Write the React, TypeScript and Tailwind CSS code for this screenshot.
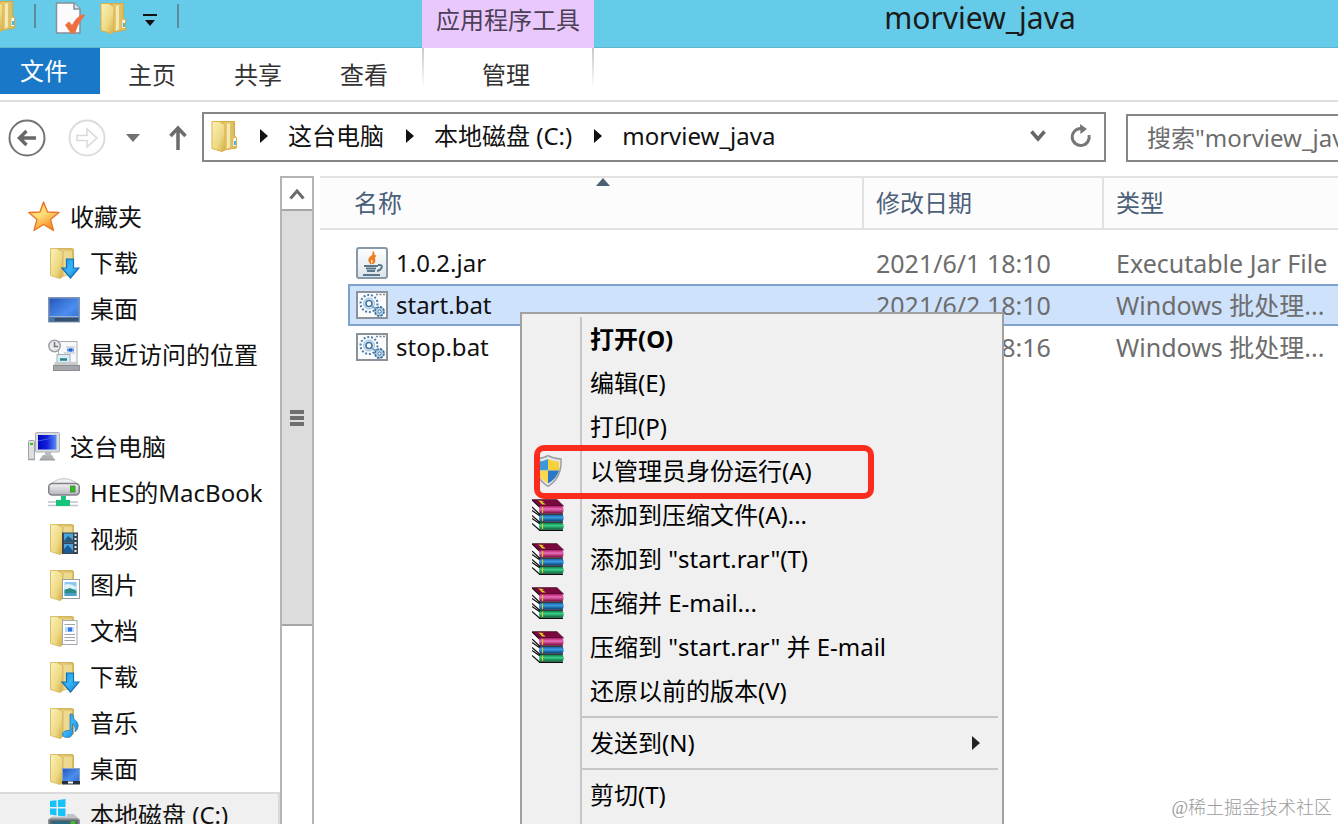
import type { ReactNode } from "react";

type IconProps = { className?: string };

function Defs() {
  return (
    <svg className="absolute h-0 w-0" aria-hidden="true">
      <defs>
        <linearGradient id="flap" x1="0" y1="0" x2="1" y2="1">
          <stop offset="0" stopColor="#fbf2b8" />
          <stop offset="0.6" stopColor="#eed984" />
          <stop offset="1" stopColor="#cfab44" />
        </linearGradient>
        <linearGradient id="back" x1="0" y1="0" x2="1" y2="0">
          <stop offset="0" stopColor="#c9ac55" />
          <stop offset="0.35" stopColor="#e4cb78" />
          <stop offset="1" stopColor="#d8b95a" />
        </linearGradient>
        <linearGradient id="arrow" x1="0" y1="0" x2="1" y2="1">
          <stop offset="0" stopColor="#1e9ae8" />
          <stop offset="0.5" stopColor="#38b4f8" />
          <stop offset="1" stopColor="#0f7fd0" />
        </linearGradient>
        <linearGradient id="screen" x1="0" y1="0" x2="1" y2="1">
          <stop offset="0" stopColor="#2456b8" />
          <stop offset="0.6" stopColor="#4c8df0" />
          <stop offset="1" stopColor="#2f6cd0" />
        </linearGradient>
        <linearGradient id="deep" x1="0" y1="0" x2="1" y2="0">
          <stop offset="0" stopColor="#0008b8" />
          <stop offset="0.5" stopColor="#1420e0" />
          <stop offset="1" stopColor="#5a92ee" />
        </linearGradient>
        <linearGradient id="star" x1="0" y1="0" x2="0.6" y2="1">
          <stop offset="0" stopColor="#ffc23c" />
          <stop offset="0.5" stopColor="#ffe07a" />
          <stop offset="1" stopColor="#f58a1f" />
        </linearGradient>
        <linearGradient id="metal" x1="0" y1="0" x2="0" y2="1">
          <stop offset="0" stopColor="#f4f4f6" />
          <stop offset="1" stopColor="#b4b4ba" />
        </linearGradient>
        <linearGradient id="jar" x1="0" y1="0" x2="0" y2="1">
          <stop offset="0" stopColor="#ffffff" />
          <stop offset="1" stopColor="#dce4ea" />
        </linearGradient>
        <linearGradient id="rarRed" x1="0" y1="0" x2="0" y2="1">
          <stop offset="0" stopColor="#b01868" />
          <stop offset="0.4" stopColor="#e870b8" />
          <stop offset="1" stopColor="#80003c" />
        </linearGradient>
        <linearGradient id="rarBlue" x1="0" y1="0" x2="0" y2="1">
          <stop offset="0" stopColor="#1460a8" />
          <stop offset="0.4" stopColor="#3c9ce0" />
          <stop offset="1" stopColor="#003e78" />
        </linearGradient>
        <linearGradient id="rarGreen" x1="0" y1="0" x2="0" y2="1">
          <stop offset="0" stopColor="#008048" />
          <stop offset="0.4" stopColor="#3ccc88" />
          <stop offset="1" stopColor="#006030" />
        </linearGradient>
      </defs>
    </svg>
  );
}

function Svg({ className = "size-8", children }: IconProps & { children: ReactNode }) {
  return (
    <svg viewBox="0 0 32 32" className={`shrink-0 ${className}`} aria-hidden="true">
      {children}
    </svg>
  );
}

function Folder({ className, children }: IconProps & { children?: ReactNode }) {
  return (
    <Svg className={className}>
      <path d="M8 1.500 H24 Q25.500 1.500 25.500 3 V27 L13 29.500 Z" fill="url(#back)" stroke="#d3b45c" strokeWidth="1" />
      <path d="M16 4 L24 3.500 V27 L16 29 Z" fill="#f2e2a0" opacity="0.7" />
      <path d="M2.500 1.500 H9 L14.500 4.500 V30 L12 31.500 L2.500 28.500 Z" fill="url(#flap)" stroke="#d9bf6c" strokeWidth="1" />
      {children}
    </Svg>
  );
}

function TabFolder({ className }: IconProps) {
  return (
    <Svg className={className}>
      <path d="M9 1.500 H24.500 V16 L26.500 17.500 V28 L13 30 Z" fill="url(#back)" stroke="#dba93a" strokeWidth="1" />
      <path d="M17 4 L20 3 V27 L17 29 Z" fill="#fff6cc" opacity="0.7" />
      <path d="M2 1.500 H9.500 L15 4.500 V30 L12 31.500 L2 28.500 Z" fill="url(#flap)" stroke="#dcb04a" strokeWidth="1" />
      <rect x="23.500" y="18" width="2.500" height="8" fill="#fff" />
      <rect x="24" y="21" width="2" height="4" fill="#48b8e0" />
    </Svg>
  );
}

function DownloadFolder() {
  return (
    <Folder>
      <path d="M18.500 12 H25.500 V21 H31 L22.500 31 L14 21 H18.500 Z" fill="url(#arrow)" stroke="#1670b4" strokeWidth="1.200" />
    </Folder>
  );
}

function VideoFolder() {
  return (
    <Folder>
      <rect x="14" y="9.500" width="16" height="21.500" fill="#3c4450" />
      <rect x="16" y="10.500" width="9" height="9" fill="#48a4dc" />
      <path d="M16 18 L20 13 L25 17 V19.500 H16 Z" fill="#245a78" />
      <rect x="16" y="21" width="9" height="9" fill="#48a4dc" />
      <path d="M16 26 L20 22 L25 28 V30 H16 Z" fill="#1c5a94" />
      <path d="M27.500 11 V31" stroke="#e8ecf0" strokeWidth="2" strokeDasharray="2 2" />
    </Folder>
  );
}

function PictureFolder() {
  return (
    <Folder>
      <rect x="14.500" y="10.500" width="17" height="19" fill="#fff" stroke="#9a9ea4" />
      <rect x="16.500" y="13" width="12" height="14" fill="#8cc8ee" />
      <path d="M16.500 16 Q21 13 28.500 18 V20 H16.500 Z" fill="#dff2fa" />
      <path d="M16.500 21 L22 19 L28.500 22 V24 H16.500 Z" fill="#2c8c84" />
      <rect x="16.500" y="24" width="12" height="3" fill="#4ca0c8" />
    </Folder>
  );
}

function DocumentFolder() {
  return (
    <Folder>
      <rect x="14.500" y="5.500" width="14.500" height="24" fill="#fdfdfd" stroke="#a4a8ac" />
      <path d="M16.500 9.500 H27 M16.500 19.500 H27 M16.500 22.500 H27 M16.500 25.500 H27" stroke="#a0a4aa" strokeWidth="1.200" />
      <rect x="17" y="12" width="9" height="5" fill="#bcd8fa" />
      <rect x="20" y="12.500" width="4" height="4" fill="#2c74e8" />
    </Folder>
  );
}

function MusicFolder() {
  return (
    <Folder>
      <path d="M22 7 H24.500 Q25 12 29 15 Q32 20 27 25 Q28 19 24.500 17 V26 Q24 31 18.500 30.500 Q14 30 14.500 26.500 Q16 23 22 23.500 Z" fill="url(#arrow)" stroke="#2e7cb0" strokeWidth="0.800" />
    </Folder>
  );
}

function DesktopFolder() {
  return (
    <Folder>
      <rect x="14.500" y="15.500" width="17" height="13" fill="url(#screen)" stroke="#8aa2c4" />
      <rect x="14" y="28" width="18" height="3.500" fill="#26303c" />
      <path d="M20 29.500 H25" stroke="#fff" strokeWidth="2" />
    </Folder>
  );
}

function Star() {
  return (
    <Svg>
      <path d="M15.500 1 L19.500 11 L31 11.500 L22.500 18.500 L25.500 29.500 L15.500 23.500 L6 29.500 L9 18.500 L0.800 11.500 L12 11 Z" fill="url(#star)" stroke="#e8782c" strokeWidth="1.400" strokeLinejoin="round" />
    </Svg>
  );
}

function Desktop() {
  return (
    <Svg>
      <rect x="0.750" y="4.750" width="30.500" height="24" fill="url(#screen)" stroke="#8496b4" strokeWidth="1.500" />
      <rect x="1.500" y="23" width="29" height="1.500" fill="#9ab4d8" />
      <rect x="1.500" y="24.500" width="29" height="4" fill="#34506e" />
      <rect x="1.500" y="24.500" width="5" height="4" fill="#4878a8" />
    </Svg>
  );
}

function Recent() {
  return (
    <Svg>
      <rect x="10.500" y="2.500" width="18.500" height="24" fill="#f6f8fa" stroke="#a8acb0" />
      <path d="M18 8 H27 M16 14 H27" stroke="#b8bcc2" />
      <path d="M19 11 H26" stroke="#5c94e8" strokeWidth="3" />
      <path d="M21 11 H24" stroke="#2c60d8" strokeWidth="3" />
      <rect x="9" y="15.500" width="13" height="9" fill="#dcecf4" stroke="#a4b0b8" />
      <path d="M7 23 L5 27 H31.500 L29 23 Z" fill="#c8cacc" />
      <path d="M12 20.500 H19" stroke="#24848c" strokeWidth="2.500" />
      <rect x="5.500" y="26.500" width="26" height="5" fill="#a4a6aa" stroke="#8c8e92" />
      <circle cx="6.500" cy="7" r="5.700" fill="#e8eaec" stroke="#9c9fa4" strokeWidth="1.500" />
      <path d="M6.500 3 V7.500 H10" fill="none" stroke="#707478" strokeWidth="1.500" />
    </Svg>
  );
}

function Computer() {
  return (
    <Svg>
      <rect x="0.500" y="9.500" width="6" height="19" rx="1" fill="#dcdfe0" stroke="#a0a4a8" />
      <rect x="2" y="12" width="3" height="2" fill="#34c424" />
      <path d="M15 24 H24 L27 29.500 H11 Z" fill="#aeb2b6" />
      <rect x="7.500" y="1.500" width="24" height="19.500" rx="1" fill="#d8dade" stroke="#aeb2b8" />
      <path d="M17 21 H23 V25 H17 Z" fill="#b8bcc0" />
      <rect x="10" y="4" width="18.500" height="14.500" fill="url(#deep)" />
      <path d="M10 10 Q20 9 28 4" fill="none" stroke="#4e7cf0" strokeWidth="1" opacity="0.7" />
      <path d="M0 28.500 H7 M12 28.500 H27" stroke="#9ea2a6" strokeWidth="1.500" />
    </Svg>
  );
}

function NetworkDrive() {
  return (
    <Svg>
      <path d="M5 5 Q16 -2 27 5 L31 10 H1 Z" fill="#f0f0f2" stroke="#b8b8c0" strokeWidth="0.800" />
      <rect x="0.750" y="6.500" width="30.500" height="11.500" rx="3.500" fill="url(#metal)" stroke="#808088" strokeWidth="1.500" />
      <rect x="22.500" y="9" width="4.500" height="6" fill="#2cc018" stroke="#4a7c40" strokeWidth="0.800" />
      <path d="M0 25 H30 M0 28.500 H30" stroke="#c0c4c8" strokeWidth="1.500" />
      <path d="M13 19 H18 V23 H22 V29 H8 V23 H13 Z" fill="#18c47c" />
    </Svg>
  );
}

function SystemDrive() {
  return (
    <Svg>
      <path d="M2 2 L8.500 1.200 V8 H2 Z M10 1 L17.500 0 V8 H10 Z M2 9.500 H8.500 V16.500 L2 15.500 Z M10 9.500 H17.500 V17.500 L10 16.700 Z" fill="#16c2f8" />
      <path d="M19 15 H26 L31 20 H1 L4 17.500 H19 Z" fill="#c0c4c8" />
      <rect x="0.750" y="20" width="30.500" height="11" rx="2" fill="#62686e" stroke="#8e9296" strokeWidth="1.500" />
      <rect x="4" y="22" width="17" height="5" fill="#2c6880" />
      <rect x="23" y="22" width="4" height="5" fill="#34c424" />
    </Svg>
  );
}

function JarFile() {
  return (
    <Svg>
      <rect x="1" y="1" width="30" height="30" rx="2" fill="url(#jar)" stroke="#8898a6" strokeWidth="2" />
      <path d="M17 4.500 Q18 8 14.500 10 Q11 13 15 17 Q13 13 17 11 Q19 8 17 4.500 Z M20 8.500 Q16 10 16.500 12.500 Q18 14.500 16 17 Q20 15 18.500 12 Q18 10 20 8.500 Z" fill="#f07c1c" stroke="#f07c1c" strokeWidth="1.200" />
      <path d="M8 19 H22 M10 21.500 H20 M11 24 H19 M7 28 H24" stroke="#58768c" strokeWidth="1.800" />
      <path d="M22 18 Q27 17.500 25.500 21 Q24.500 23 21 24" fill="none" stroke="#58768c" strokeWidth="2" />
    </Svg>
  );
}

function BatFile() {
  return (
    <Svg>
      <rect x="1" y="3" width="30" height="26" fill="#fafcfe" stroke="#8c929a" strokeWidth="2" />
      <path d="M20 5.500 H29" stroke="#7c8894" strokeWidth="1.500" strokeDasharray="2 1.500" />
      <circle cx="13" cy="14.500" r="8.500" fill="none" stroke="#4c7ca8" strokeWidth="2" strokeDasharray="2 1.800" />
      <circle cx="13" cy="14.500" r="5.500" fill="#d4e6f2" stroke="#9cbcd6" />
      <circle cx="13" cy="14.500" r="3" fill="#fff" stroke="#4474a4" strokeWidth="1.600" />
      <path d="M16 17.500 L22 21" stroke="#6c9cc4" strokeWidth="1.500" />
      <circle cx="23.500" cy="22.500" r="4.500" fill="#b4d4ea" stroke="#44749c" strokeWidth="1.800" strokeDasharray="2.500 1" />
      <circle cx="23.500" cy="22.500" r="1.600" fill="#fff" stroke="#4474a4" />
    </Svg>
  );
}

function Shield() {
  return (
    <Svg>
      <path d="M16 0.700 Q22 4 29 4 Q30 23 16 31.300 Q2 23 3 4 Q10 4 16 0.700 Z" fill="#e4e6e8" stroke="#9a9ea2" strokeWidth="1.500" />
      <path d="M16 4 V15.500 H5 Q4.800 11 5.300 6.500 Q11 6.500 16 4 Z" fill="#3c98dc" />
      <path d="M16 4 Q21 6.500 26.700 6.500 Q27.200 11 27 15.500 H16 Z" fill="#f8d038" />
      <path d="M5 15.500 H16 V28.500 Q7 23.500 5 15.500 Z" fill="#fbd84e" />
      <path d="M27 15.500 H16 V28.500 Q25 23.500 27 15.500 Z" fill="#2c78c8" />
    </Svg>
  );
}

function Rar() {
  return (
    <Svg>
      <path d="M0 0.500 L8 8 V15 L0 8 Z M0 11 L8 16 V23 L0 16.500 Z M0 19 L8 24 V31 L0 24.500 Z" fill="#fff" />
      <path d="M0 1 L8 8.500 M0 8 L8 15.500 M0 11.500 L8 17 M0 16.500 L8 23.500 M0 19.500 L8 25 M0 24.500 L8 31.500" fill="none" stroke="#111" strokeWidth="1.200" />
      <path d="M0.500 0.700 H25 L31.500 7 H7 Z" fill="#7c0840" stroke="#3c0020" strokeWidth="0.800" />
      <path d="M6 1.500 L12 2 L10 3 L14 5.500 H10 L8 3 Z" fill="#e8d020" />
      <path d="M8 7 H30 Q33 10 30.500 14.500 H8 Q6 10 8 7 Z" fill="url(#rarRed)" />
      <path d="M8 15.800 H30.500 Q33 18.500 30.500 22.500 H8 Q6 19 8 15.800 Z" fill="url(#rarBlue)" />
      <path d="M8 23.800 H30.500 Q33 27 30.500 30.800 H8 Q6 27 8 23.800 Z" fill="url(#rarGreen)" />
      <path d="M7 15.200 H31 M7 23.200 H31 M7 31.300 H31" stroke="#0c0c10" strokeWidth="1.200" />
      <path d="M10.500 8 V14 M10.500 16.500 V22 M10.500 24.500 V30" stroke="#d8c820" strokeWidth="1.200" />
    </Svg>
  );
}

function CheckedPage() {
  return (
    <Svg>
      <path d="M1.500 1 H19 L25 7 V31 H1.500 Z" fill="#fbfbfc" stroke="#84909a" strokeWidth="1.500" />
      <path d="M19 1 V7 H25" fill="#dce0e4" stroke="#84909a" strokeWidth="1.500" />
      <path d="M10 23 L14 19.500 L17 23 Q21 15 28 12 L30 13.500 Q23 21 20 31.500 H16 Z" fill="#ee7040" />
    </Svg>
  );
}

type NavItem = { label: string; icon: ReactNode; current?: boolean };

const favorites: NavItem[] = [
  { label: "下载", icon: <DownloadFolder /> },
  { label: "桌面", icon: <Desktop /> },
  { label: "最近访问的位置", icon: <Recent /> },
];

const thisPc: NavItem[] = [
  { label: "HES的MacBook", icon: <NetworkDrive /> },
  { label: "视频", icon: <VideoFolder /> },
  { label: "图片", icon: <PictureFolder /> },
  { label: "文档", icon: <DocumentFolder /> },
  { label: "下载", icon: <DownloadFolder /> },
  { label: "音乐", icon: <MusicFolder /> },
  { label: "桌面", icon: <DesktopFolder /> },
  { label: "本地磁盘 (C:)", icon: <SystemDrive />, current: true },
];

function NavGroup({ label, icon, items }: { label: string; icon: ReactNode; items: NavItem[] }) {
  return (
    <section>
      <a href="#" className="flex h-[46px] items-center gap-2.5 pl-7">
        {icon}
        <span>{label}</span>
      </a>
      <ul>
        {items.map((item) => (
          <li key={item.label}>
            <a
              href="#"
              className={
                item.current
                  ? "flex h-[46px] items-center gap-2.5 border-2 border-l-0 border-[#dadada] bg-[#f0f0f0] pl-12"
                  : "flex h-[46px] items-center gap-2.5 pl-12"
              }
            >
              {item.icon}
              <span>{item.label}</span>
            </a>
          </li>
        ))}
      </ul>
    </section>
  );
}

const files = [
  { name: "1.0.2.jar", date: "2021/6/1 18:10", type: "Executable Jar File", icon: <JarFile /> },
  { name: "start.bat", date: "2021/6/2 18:10", type: "Windows 批处理...", icon: <BatFile />, selected: true },
  { name: "stop.bat", date: "2021/6/2 18:16", type: "Windows 批处理...", icon: <BatFile /> },
];

type MenuEntry = { label: string; icon?: ReactNode; bold?: boolean; marked?: boolean; submenu?: boolean };

const menuGroups: MenuEntry[][] = [
  [
    { label: "打开(O)", bold: true },
    { label: "编辑(E)" },
    { label: "打印(P)" },
    { label: "以管理员身份运行(A)", icon: <Shield />, marked: true },
    { label: "添加到压缩文件(A)...", icon: <Rar /> },
    { label: '添加到 "start.rar"(T)', icon: <Rar /> },
    { label: "压缩并 E-mail...", icon: <Rar /> },
    { label: '压缩到 "start.rar" 并 E-mail', icon: <Rar /> },
    { label: "还原以前的版本(V)" },
  ],
  [{ label: "发送到(N)", submenu: true }],
  [{ label: "剪切(T)" }],
];

function ContextMenu() {
  return (
    <div
      role="menu"
      className="absolute top-[312px] bottom-0 left-[520px] w-[484px] overflow-hidden border-2 border-b-0 border-[#a0a0a0] bg-[#f0f0f0] pt-[3px] text-black"
    >
      <div className="h-full bg-[linear-gradient(#c6c6c6,#c6c6c6)] bg-[length:2px_100%] bg-[position:58px_0] bg-no-repeat">
        {menuGroups.map((group, g) => (
          <div key={g}>
            {g > 0 && (
              <div role="separator" className="flex h-2 items-center pr-1 pl-[60px]">
                <div className="h-0.5 w-full bg-[#c6c6c6]" />
              </div>
            )}
            {group.map((entry) => (
              <button
                key={entry.label}
                type="button"
                role="menuitem"
                className="relative flex h-11 w-full items-center pr-4 text-left"
              >
                <span className="flex w-[68px] shrink-0 pl-2.5">{entry.icon}</span>
                <span className={entry.bold ? "flex-1 font-bold whitespace-pre" : "flex-1 whitespace-pre"}>
                  {entry.label}
                </span>
                {entry.submenu && (
                  <svg viewBox="0 0 8 14" className="mr-1.5 h-3.5 w-2" aria-hidden="true">
                    <path d="M0 0 L8 7 L0 14 Z" fill="#222" />
                  </svg>
                )}
                {entry.marked && (
                  <span className="absolute -top-1 -bottom-1.5 left-3 w-[340px] rounded-[10px] border-6 border-[#fb2c1e]" />
                )}
              </button>
            ))}
          </div>
        ))}
      </div>
    </div>
  );
}

function Crumb({ children }: { children: string }) {
  return (
    <>
      <svg viewBox="0 0 8 14" className="ml-0.5 h-3.5 w-2 shrink-0" aria-hidden="true">
        <path d="M0 0 L8 7 L0 14 Z" fill="#111" />
      </svg>
      <a href="#" className="whitespace-nowrap">
        {children}
      </a>
    </>
  );
}

export default function App() {
  return (
    <div className="relative flex h-screen flex-col overflow-hidden bg-white font-['Noto_Sans','Noto_Sans_CJK_SC',sans-serif] text-2xl leading-8 text-[#111]">
      <Defs />

      <header className="flex h-12 shrink-0 border-b border-[#62b4cc] bg-[#66cbe9]">
        <div className="flex w-[422px] shrink-0 items-start">
          <TabFolder className="-ml-3 size-8" />
          <span className="mt-1 ml-3.5 h-6 w-0.5 bg-[#5a8c9c]" />
          <button type="button" aria-label="属性" className="mt-0.5 ml-[19px]">
            <CheckedPage />
          </button>
          <button type="button" aria-label="新建文件夹" className="mt-0.5 ml-3">
            <TabFolder />
          </button>
          <button type="button" aria-label="自定义快速访问工具栏" className="mt-3.5 ml-3">
            <svg viewBox="0 0 14 12" className="h-3 w-3.5" aria-hidden="true">
              <path d="M0 0 H14 V2 H0 Z M2 6 H12 L7 12 Z" fill="#111" />
            </svg>
          </button>
          <span className="mt-1 ml-5 h-6 w-0.5 bg-[#5a8c9c]" />
        </div>
        <div className="-mb-px flex w-[172px] shrink-0 justify-center bg-[#e9c8fc] pt-1 text-[#4c3f56]">
          应用程序工具
        </div>
        <h1 className="flex-1 pl-7 text-center text-3xl leading-9 text-[#1b1b1b]">morview_java</h1>
      </header>

      <nav className="flex h-[54px] shrink-0 items-start border-b-2 border-[#dedede] text-[#333]">
        <button type="button" className="h-[46px] w-[100px] bg-[#1a78c8] pr-3 text-white">
          文件
        </button>
        <button type="button" className="h-[54px] w-[106px] pr-0.5">
          主页
        </button>
        <button type="button" className="h-[54px] w-[106px] pr-0.5">
          共享
        </button>
        <button type="button" className="h-[54px] w-[106px] pr-0.5">
          查看
        </button>
        <div className="ml-1 flex h-[52px] w-[172px] justify-between">
          <span className="h-10 w-0.5 bg-linear-to-b from-[#c8c8c8] to-white" />
          <button type="button" className="h-[54px] flex-1 pr-1">
            管理
          </button>
          <span className="h-10 w-0.5 bg-linear-to-b from-[#c8c8c8] to-white" />
        </div>
      </nav>

      <div className="flex h-[74px] shrink-0 items-center overflow-hidden">
        <div className="mb-0.5 flex w-[202px] shrink-0 items-center pl-2">
          <button type="button" aria-label="后退">
            <svg viewBox="0 0 38 38" className="size-[38px]" fill="none" aria-hidden="true">
              <circle cx="19" cy="19" r="17.500" stroke="#747474" strokeWidth="2" />
              <path d="M28 19 H12 M18.500 12 L11.500 19 L18.500 26" stroke="#686868" strokeWidth="3.500" />
            </svg>
          </button>
          <button type="button" aria-label="前进" className="ml-[22px]">
            <svg viewBox="0 0 38 38" className="size-[38px]" fill="none" aria-hidden="true">
              <circle cx="19" cy="19" r="17.500" stroke="#dcdcdc" strokeWidth="2" />
              <path d="M9 16.500 H19 V10 L29 19 L19 28 V21.500 H9 Z" stroke="#dadada" strokeWidth="1.500" />
            </svg>
          </button>
          <button type="button" aria-label="最近浏览的位置" className="ml-5">
            <svg viewBox="0 0 14 8" className="h-2 w-3.5" aria-hidden="true">
              <path d="M0 0 H14 L7 8 Z" fill="#707070" />
            </svg>
          </button>
          <button type="button" aria-label="上移" className="ml-[29px]">
            <svg viewBox="0 0 18 26" className="h-[26px] w-[18px]" fill="none" aria-hidden="true">
              <path d="M9 25 V3 M1.500 11 L9 3 L16.500 11" stroke="#6c6c6c" strokeWidth="3.500" />
            </svg>
          </button>
        </div>
        <div className="mb-1 flex h-[50px] min-w-0 flex-1 items-center gap-5 border-2 border-[#868686] pr-3 pb-0.5 pl-1.5">
          <TabFolder className="-mr-1 size-8" />
          <Crumb>这台电脑</Crumb>
          <Crumb>本地磁盘 (C:)</Crumb>
          <Crumb>morview_java</Crumb>
          <button type="button" aria-label="以前的位置" className="ml-auto">
            <svg viewBox="0 0 16 12" className="h-3 w-4" fill="none" aria-hidden="true">
              <path d="M1.500 1.500 L8 9 L14.500 1.500" stroke="#666" strokeWidth="3.500" />
            </svg>
          </button>
          <button type="button" aria-label="刷新" className="pl-1">
            <svg viewBox="0 0 22 24" className="h-6 w-[22px]" fill="none" aria-hidden="true">
              <path d="M12 4.500 H10.500 A8.500 8.500 0 1 0 19 11" stroke="#767676" strokeWidth="3" />
              <path d="M10 0 L17 5 L10.500 10 Z" fill="#767676" />
            </svg>
          </button>
        </div>
        <div className="mb-0.5 ml-5 flex w-[212px] shrink-0">
          <label htmlFor="search" className="sr-only">
            搜索
          </label>
          <input
            id="search"
            type="text"
            placeholder={'搜索"morview_java"'}
            className="-mr-16 h-12 w-[276px] shrink-0 border-2 border-[#868686] pb-0.5 pl-[19px] placeholder-[#6d6d6d] outline-none"
          />
        </div>
      </div>

      <main className="flex min-h-0 flex-1">
        <aside className="w-[280px] shrink-0 overflow-hidden pt-[18px] whitespace-nowrap">
          <NavGroup label="收藏夹" icon={<Star />} items={favorites} />
          <div className="h-[46px]" />
          <NavGroup label="这台电脑" icon={<Computer />} items={thisPc} />
        </aside>

        <div className="flex w-[34px] shrink-0 flex-col border-2 border-b-0 border-[#b4b4b4]">
          <button type="button" aria-label="向上滚动" className="flex h-[31px] shrink-0 items-center justify-center">
            <svg viewBox="0 0 16 12" className="h-3 w-4" fill="none" aria-hidden="true">
              <path d="M1.500 10.500 L8 3 L14.500 10.500" stroke="#6a6a6a" strokeWidth="3" />
            </svg>
          </button>
          <div className="flex h-[417px] flex-col items-center justify-center gap-0.5 border-y-2 border-[#a6a6a6] bg-[#dcdcdc]">
            <span className="h-1 w-3.5 bg-[#6e6e6e]" />
            <span className="h-1 w-3.5 bg-[#6e6e6e]" />
            <span className="h-1 w-3.5 bg-[#6e6e6e]" />
          </div>
        </div>

        <div className="min-w-0 flex-1 overflow-hidden pl-1.5">
          <table className="w-full table-fixed border-separate border-spacing-0 text-left whitespace-nowrap">
            <colgroup>
              <col className="w-7" />
              <col className="w-[516px]" />
              <col className="w-60" />
              <col />
            </colgroup>
            <thead className="text-[#4c607a]">
              <tr className="h-[54px]">
                <th
                  colSpan={2}
                  scope="col"
                  className="relative border-y-2 border-r-2 border-[#e2e2e2] bg-[#fcfcfc] pl-[34px] font-normal"
                >
                  名称
                  <svg viewBox="0 0 14 8" className="absolute top-0 left-[276px] h-2 w-3.5" aria-hidden="true">
                    <path d="M7 0 L14 8 H0 Z" fill="#4c6074" />
                  </svg>
                </th>
                <th scope="col" className="border-y-2 border-r-2 border-[#e2e2e2] bg-[#fcfcfc] pl-3 font-normal">
                  修改日期
                </th>
                <th scope="col" className="border-y-2 border-[#e2e2e2] bg-[#fcfcfc] pl-3 font-normal">
                  类型
                </th>
              </tr>
              <tr className="h-3" aria-hidden="true">
                <td colSpan={4} />
              </tr>
            </thead>
            <tbody>
              {files.map((file) => (
                <tr key={file.name} className="h-[42px] text-[25px] text-[#6d6d6d]">
                  <td />
                  <td
                    className={
                      file.selected
                        ? "border-y-2 border-l-2 border-[#7da2ce] bg-[#cfe2fc] pl-1.5 text-2xl leading-8 text-[#111]"
                        : "pl-2 text-2xl leading-8 text-[#111]"
                    }
                  >
                    <span className="flex items-center gap-2">
                      {file.icon}
                      <span>{file.name}</span>
                    </span>
                  </td>
                  <td className={file.selected ? "border-y-2 border-[#7da2ce] bg-[#cfe2fc] pl-3" : "pl-3"}>
                    {file.date}
                  </td>
                  <td className={file.selected ? "border-y-2 border-[#7da2ce] bg-[#cfe2fc] pl-3" : "pl-3"}>
                    {file.type}
                  </td>
                </tr>
              ))}
            </tbody>
          </table>
        </div>
      </main>

      <ContextMenu />

      <p className="absolute right-1.5 bottom-1 font-['Liberation_Serif','Noto_Sans_CJK_SC',serif] text-lg leading-6 font-light text-[#9a9a9a]">
        @稀土掘金技术社区
      </p>
    </div>
  );
}
